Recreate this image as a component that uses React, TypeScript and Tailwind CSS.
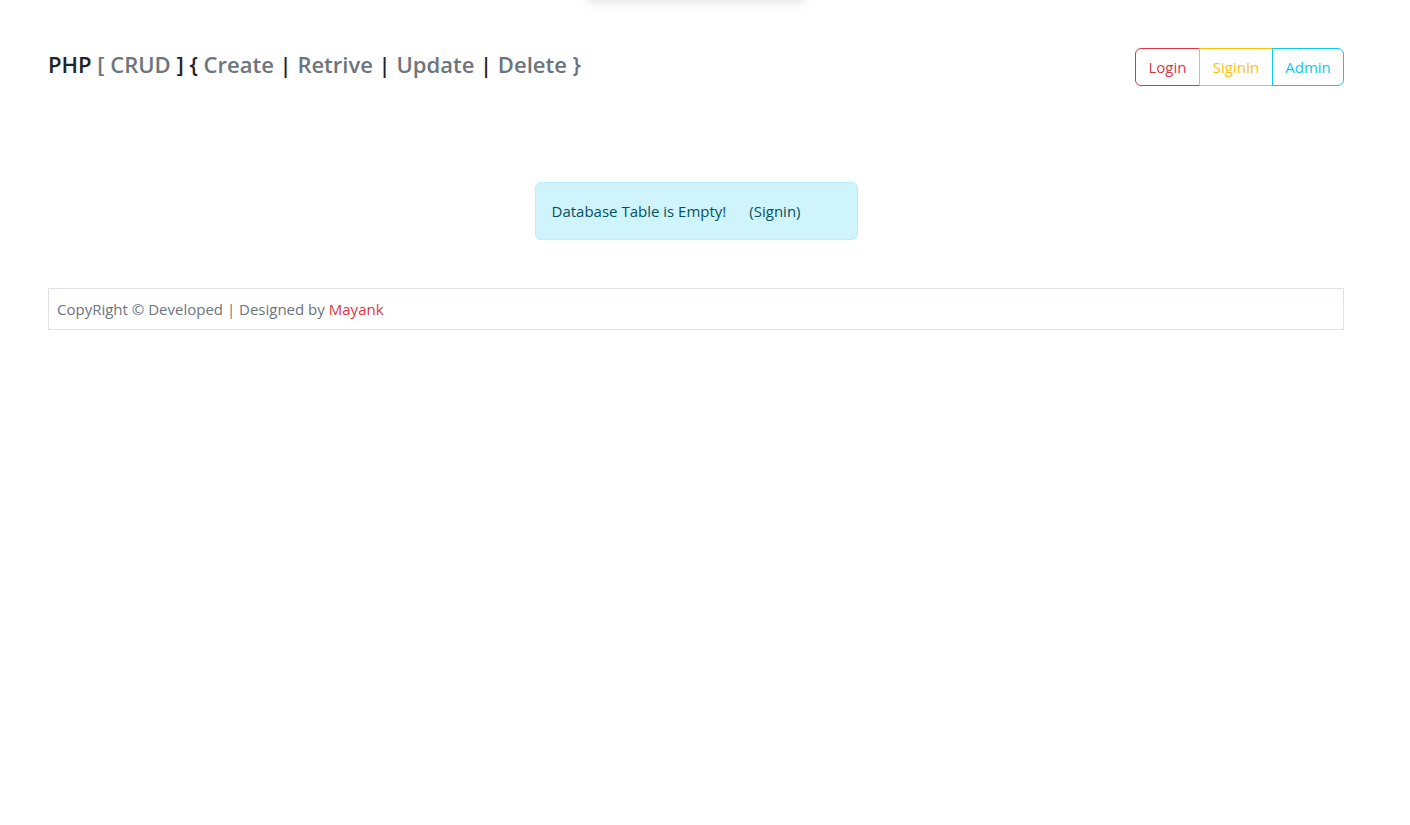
export default function App() {
  return (
    <div className="relative min-h-[825px] bg-white text-[#212529] font-['Open_Sans',sans-serif] overflow-hidden">
      {/* shadow of the hidden bar above the viewport */}
      <div className="absolute left-[585px] top-[-40px] h-[40px] w-[222px] rounded-lg bg-white shadow-[0_2px_12px_rgba(0,0,0,0.12)]" />

      <div className="ml-[48px] w-[1296px]">
        <div className="flex items-start justify-between pt-[48px]">
          <h4 className="mt-[3px] text-[22px] font-semibold leading-[1.2]">
            PHP <span className="text-[#6c757d]">[ CRUD</span> ] {'{'}{' '}
            <span className="text-[#6c757d]">Create</span> |{' '}
            <span className="text-[#6c757d]">Retrive</span> |{' '}
            <span className="text-[#6c757d]">Update</span> |{' '}
            <span className="text-[#6c757d]">Delete {'}'}</span>
          </h4>
          <div className="flex h-[38px] text-[15px]">
            <button className="w-[65px] rounded-l-[6px] border border-[#dc3545] text-[#dc3545]">Login</button>
            <button className="-ml-px w-[74px] border border-[#ffc107] text-[#ffc107]">SiginIn</button>
            <button className="-ml-px w-[72px] rounded-r-[6px] border border-[#0dcaf0] text-[#0dcaf0]">Admin</button>
          </div>
        </div>

        <div className="mt-[96px] flex justify-center">
          <div className="flex h-[58px] w-[323px] items-center gap-[23px] rounded-[6px] border border-[#b6effb] bg-[#cff4fc] px-[16px] text-[15px] text-[#055160]">
            <span>Database Table is Empty!</span>
            <span>(Signin)</span>
          </div>
        </div>

        <div className="mt-[48px] flex h-[42px] items-center border border-[#dee2e6] px-[8px] text-[15px] text-[#6c757d]">
          CopyRight © Developed | Designed by <span className="ml-[4px] text-[#dc3545]">Mayank</span>
        </div>
      </div>
    </div>
  );
}
